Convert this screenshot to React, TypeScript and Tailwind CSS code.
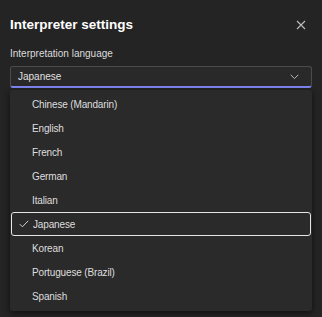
import React from "react";

const items = [
  "Chinese (Mandarin)",
  "English",
  "French",
  "German",
  "Italian",
  "Japanese",
  "Korean",
  "Portuguese (Brazil)",
  "Spanish",
];

export default function App() {
  return (
    <div
      className="w-[322px] h-[317px] bg-[#242424] text-[#d6d6d6] overflow-hidden flex flex-col"
      style={{ fontFamily: '"Liberation Sans", Arial, sans-serif' }}
    >
      <div className="flex items-center justify-between pl-[10px] pr-[16px] pt-[14px] h-[36px]">
        <span className="text-[13.5px] font-bold text-white">Interpreter settings</span>
        <svg width="10" height="10" viewBox="0 0 10 10" className="text-[#bdbdbd]">
          <path d="M1 1L9 9M9 1L1 9" stroke="currentColor" strokeWidth="1.1" fill="none" />
        </svg>
      </div>
      <div className="pl-[10px] pt-[11px] text-[10px] leading-[13px] text-[#dcdcdc]">Interpretation language</div>
      <div className="mx-[10px] mt-[6px] h-[22px] rounded-[3px] border border-[#4b4b4b] border-b-2 border-b-[#7f85f5] bg-[#292929] flex items-center justify-between pl-[7px] pr-[12px]">
        <span className="text-[10px] text-[#e0e0e0]">Japanese</span>
        <svg width="9" height="6" viewBox="0 0 9 6">
          <path d="M0.7 0.8L4.5 4.6L8.3 0.8" stroke="#bcbcbc" strokeWidth="1" fill="none" />
        </svg>
      </div>
      <div className="mx-[10px] mt-[2px] h-[221px] rounded-[3px] bg-[#2a2a2a] shadow-[0_2px_6px_rgba(0,0,0,0.6)] flex flex-col py-[2px]">
        {items.map((it) => {
          const sel = it === "Japanese";
          return (
            <div
              key={it}
              className={
                "h-[24px] flex items-center shrink-0 " +
                (sel ? "border border-[#e6e6e6] rounded-[3px] mx-px" : "")
              }
            >
              <span className={"w-[22px] flex justify-center " + (sel ? "-ml-px" : "")}>
                {sel && (
                  <svg width="10" height="8" viewBox="0 0 10 8" className="ml-[3px]">
                    <path d="M0.8 4.2L3.4 6.8L9.2 0.8" stroke="#d0d0d0" strokeWidth="1" fill="none" />
                  </svg>
                )}
              </span>
              <span className="text-[10px] text-[#dedede] tracking-[-0.15px]">{it}</span>
            </div>
          );
        })}
      </div>
    </div>
  );
}
